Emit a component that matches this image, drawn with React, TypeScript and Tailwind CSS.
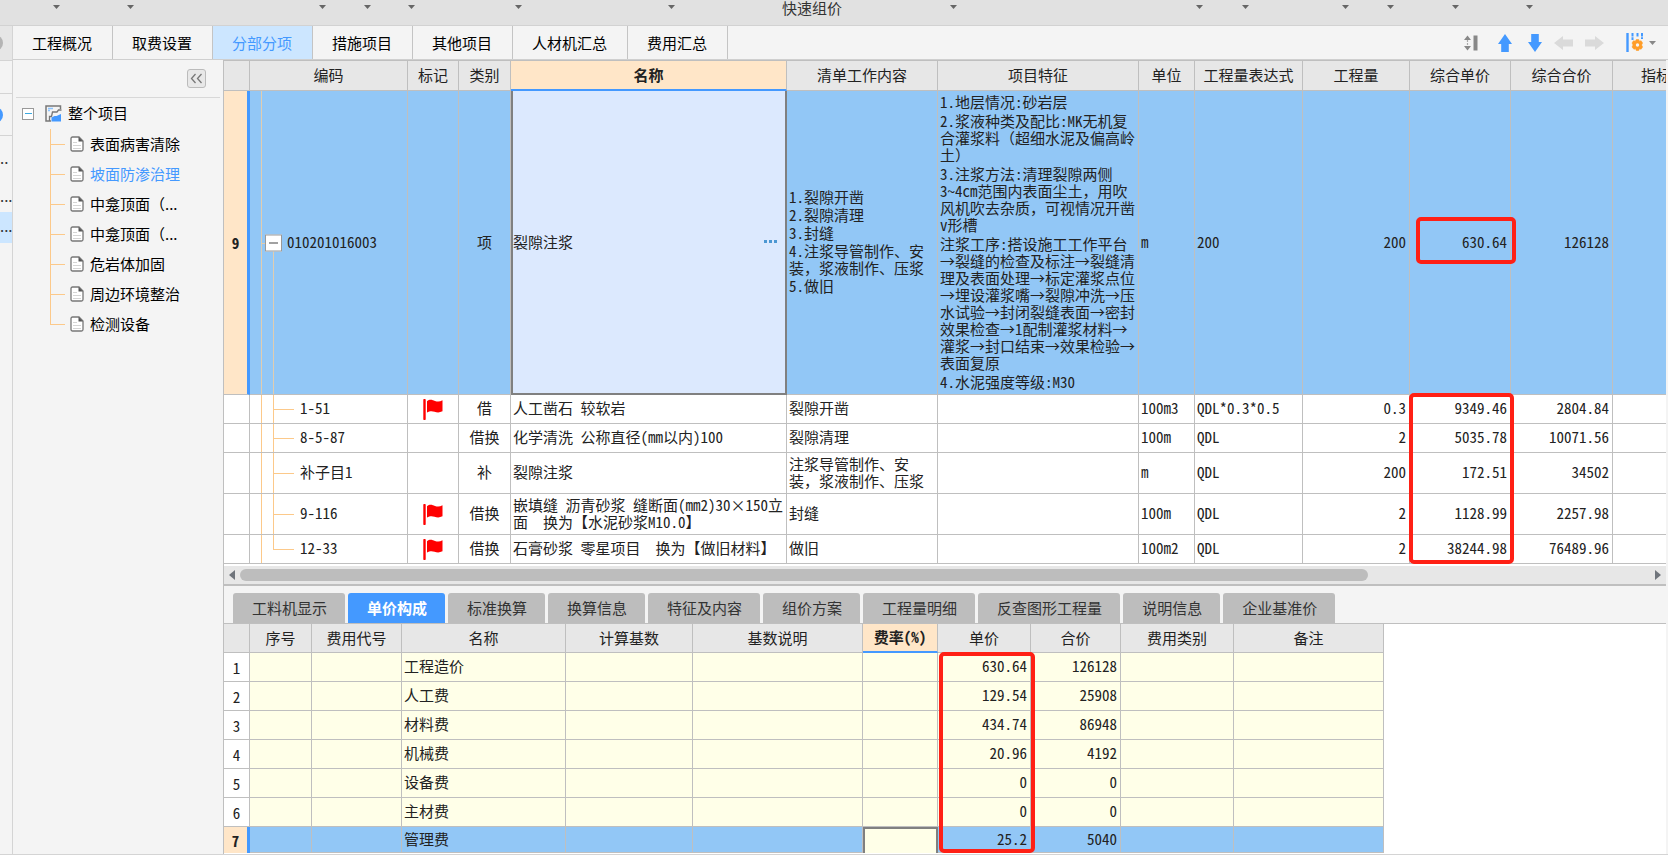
import { useState, type ReactNode } from "react";
import clsx from "clsx";

type SubItem = {
  code: string;
  flag: boolean;
  kind: string;
  name: string;
  work: string;
  unit: string;
  expr: string;
  qty: string;
  price: string;
  total: string;
  height: string;
};

const TOOLBAR_LEFT = ["w-[60px]", "w-[74px]", "w-[192px]", "w-[45px]", "w-[44px]", "w-[107px]", "w-[153px]"];
const TOOLBAR_RIGHT = ["w-[115px]", "w-[246px]", "w-[46px]", "w-[100px]", "w-[45px]", "w-[65px]", "w-[74px]"];

const PAGES = ["工程概况", "取费设置", "分部分项", "措施项目", "其他项目", "人材机汇总", "费用汇总"];

const TREE = ["表面病害清除", "坡面防渗治理", "中龛顶面（...", "中龛顶面（...", "危岩体加固", "周边环境整治", "检测设备"];

const ITEM_COLS = [
  { title: "", width: "w-[26px]" },
  { title: "编码", width: "w-[158px]" },
  { title: "标记", width: "w-[51px]" },
  { title: "类别", width: "w-[52px]" },
  { title: "名称", width: "w-[276px]" },
  { title: "清单工作内容", width: "w-[151px]" },
  { title: "项目特征", width: "w-[201px]" },
  { title: "单位", width: "w-[56px]" },
  { title: "工程量表达式", width: "w-[108px]" },
  { title: "工程量", width: "w-[107px]" },
  { title: "综合单价", width: "w-[101px]" },
  { title: "综合合价", width: "w-[102px]" },
];

const WORK = ["1.裂隙开凿", "2.裂隙清理", "3.封缝", "4.注浆导管制作、安\n装，浆液制作、压浆", "5.做旧"];

const FEATURES = [
  "1.地层情况:砂岩层",
  "2.浆液种类及配比:MK无机复\n合灌浆料（超细水泥及偏高岭\n土）",
  "3.注浆方法:清理裂隙两侧\n3~4cm范围内表面尘土，用吹\n风机吹去杂质，可视情况开凿\nv形槽",
  "注浆工序:搭设施工工作平台\n→裂缝的检查及标注→裂缝清\n理及表面处理→标定灌浆点位\n→埋设灌浆嘴→裂隙冲洗→压\n水试验→封闭裂缝表面→密封\n效果检查→1配制灌浆材料→\n灌浆→封口结束→效果检验→\n表面复原",
  "4.水泥强度等级:M30",
];

const SUB_ITEMS: SubItem[] = [
  { code: "1-51", flag: true, kind: "借", name: "人工凿石 较软岩", work: "裂隙开凿", unit: "100m3", expr: "QDL*0.3*0.5", qty: "0.3", price: "9349.46", total: "2804.84", height: "h-[29px]" },
  { code: "8-5-87", flag: false, kind: "借换", name: "化学清洗 公称直径(mm以内)100", work: "裂隙清理", unit: "100m", expr: "QDL", qty: "2", price: "5035.78", total: "10071.56", height: "h-[29px]" },
  { code: "补子目1", flag: false, kind: "补", name: "裂隙注浆", work: "注浆导管制作、安\n装，浆液制作、压浆", unit: "m", expr: "QDL", qty: "200", price: "172.51", total: "34502", height: "h-[41px]" },
  { code: "9-116", flag: true, kind: "借换", name: "嵌填缝 沥青砂浆 缝断面(mm2)30×150立\n面  换为【水泥砂浆M10.0】", work: "封缝", unit: "100m", expr: "QDL", qty: "2", price: "1128.99", total: "2257.98", height: "h-[41px]" },
  { code: "12-33", flag: true, kind: "借换", name: "石膏砂浆 零星项目  换为【做旧材料】", work: "做旧", unit: "100m2", expr: "QDL", qty: "2", price: "38244.98", total: "76489.96", height: "h-[29px]" },
];

const DETAIL_TABS = ["工料机显示", "单价构成", "标准换算", "换算信息", "特征及内容", "组价方案", "工程量明细", "反查图形工程量", "说明信息", "企业基准价"];

const FEE_COLS = [
  { title: "", width: "w-[26px]" },
  { title: "序号", width: "w-[62px]" },
  { title: "费用代号", width: "w-[90px]" },
  { title: "名称", width: "w-[164px]" },
  { title: "计算基数", width: "w-[127px]" },
  { title: "基数说明", width: "w-[170px]" },
  { title: "费率(%)", width: "w-[75px]" },
  { title: "单价", width: "w-[93px]" },
  { title: "合价", width: "w-[90px]" },
  { title: "费用类别", width: "w-[113px]" },
  { title: "备注", width: "w-[150px]" },
];

const FEES = [
  { name: "工程造价", price: "630.64", total: "126128" },
  { name: "人工费", price: "129.54", total: "25908" },
  { name: "材料费", price: "434.74", total: "86948" },
  { name: "机械费", price: "20.96", total: "4192" },
  { name: "设备费", price: "0", total: "0" },
  { name: "主材费", price: "0", total: "0" },
  { name: "管理费", price: "25.2", total: "5040" },
];

const GRID_FONT = "[font-feature-settings:'hwid'] text-[15px] leading-[17px] text-[#222]";

// Grid text uses half-width latin, Chinese punctuation must stay full width
function GridText({ text }: { text: string }) {
  return (
    <>
      {text.split(/([（），])/).map((part, i) =>
        i % 2 ? (
          <span key={i} className="[font-feature-settings:normal]">
            {part}
          </span>
        ) : (
          part
        )
      )}
    </>
  );
}

function Caret({ className = "text-[#666]" }: { className?: string }) {
  return (
    <svg width="7" height="4" viewBox="0 0 7 4" className={clsx("shrink-0", className)}>
      <path d="M0 0h7L3.5 4z" fill="currentColor" />
    </svg>
  );
}

function Flag() {
  return (
    <svg width="20" height="21" viewBox="0 0 20 21" className="mx-auto block">
      <path d="M1.5 1v19" stroke="#ff0000" strokeWidth="2.4" strokeLinecap="round" />
      <path d="M4 2.2C7-.4 9.500 1 12 1.900c2.500 1 5 .8 7.500-.6v11c-3 1.500-5.500 1.300-8 .4-2.500-.8-4.800-.8-7.500.8z" fill="#ff0000" />
    </svg>
  );
}

function DocIcon() {
  return (
    <svg width="14" height="16" viewBox="0 0 14 16" className="shrink-0">
      <path d="M1 2.500A1.500 1.500 0 0 1 2.500 1H9l4 4v8.500a1.500 1.500 0 0 1-1.500 1.500h-9A1.500 1.500 0 0 1 1 13.500z" fill="#fff" stroke="#777" strokeWidth="1.300" />
      <path d="M8.500 1v4.500H13z" fill="#555" />
      <path d="M3 6.500h4M3 9.500h8M3 12.500h8" stroke="#d5d5d5" />
    </svg>
  );
}

function ProjectIcon() {
  return (
    <svg width="17" height="17" viewBox="0 0 17 17" className="shrink-0">
      <path d="M15.500 4V1H1v15h5" fill="none" stroke="#777" strokeWidth="1.500" />
      <path d="M3 3.500h5M3 5.500h2" stroke="#8cc4ff" strokeWidth="1.500" />
      <path d="M4.500 16v-4.500h2l1-4.500h4.500l1.500-2h3" fill="none" stroke="#777" strokeWidth="1.300" />
      <path d="M6.500 12.500l3-1.500h2l4.500-2v7.500H6.500z" fill="#4499ff" />
    </svg>
  );
}

function Toolbar() {
  const menus = (widths: string[], from: number) =>
    widths.map((w, i) => (
      <button key={i} aria-label={`菜单 ${from + i}`} className={clsx("flex h-full shrink-0 justify-end pt-[5px]", w)}>
        <Caret />
      </button>
    ));

  return (
    <header className="flex h-[26px] overflow-hidden border-b border-[#d2d2d2] bg-[#e1e1e1]">
      {menus(TOOLBAR_LEFT, 1)}
      <button className="flex w-[167px] shrink-0 justify-end text-[15px] leading-[16px] text-[#333]">快速组价</button>
      {menus(TOOLBAR_RIGHT, 8)}
    </header>
  );
}

function EdgeStrip() {
  return (
    <aside className="flex w-[13px] shrink-0 flex-col overflow-hidden border-r border-[#d4d4d4] bg-[#f4f4f4] text-[15px] leading-[16px] text-[#333]">
      <div className="flex h-[35px] items-center border-b border-[#d4d4d4] bg-[#e6e6e6]">
        <span className="-ml-[13px] size-4 shrink-0 rounded-full bg-[#b4b4b4]" />
      </div>
      <div className="h-[33px] border-b border-[#d4d4d4]" />
      <div className="flex h-[42px] items-center border-b border-[#d4d4d4]">
        <span className="-ml-[13px] size-4 shrink-0 rounded-full bg-[#4499ff]" />
      </div>
      <div className="h-[32px] pt-[14px]">..</div>
      <div className="flex h-[44px] items-end pb-2">...</div>
      <div className="flex h-[31px] items-center bg-[#cce6ff] pb-1">...</div>
    </aside>
  );
}

function PageNav() {
  const [page, setPage] = useState("分部分项");

  return (
    <nav className="flex h-[34px] items-center border-b border-[#cfcfcf] bg-[#f4f4f4] text-[15px]">
      {PAGES.map((p) => (
        <button
          key={p}
          onClick={() => setPage(p)}
          className={clsx(
            "h-full shrink-0 border-r border-[#c4c4c4] pt-[2px] pr-5 pl-[19px]",
            p === page ? "bg-[#cce6ff] text-[#4499ff]" : "text-black"
          )}
        >
          {p}
        </button>
      ))}
      <div className="ml-auto flex items-center pr-3">
        <button aria-label="行高" className="mr-5">
          <svg width="14" height="16" viewBox="0 0 14 16">
            <path d="M0 5l3.500-4.500L7 5zM0 11l3.500 4.500L7 11z" fill="#888" />
            <path d="M3.500 5v6" stroke="#aaa" strokeWidth="1.200" strokeDasharray="2 1" />
            <path d="M9.500.5h4v15h-4z" fill="#888" />
          </svg>
        </button>
        <button aria-label="上移" className="mr-4">
          <svg width="14" height="18" viewBox="0 0 14 18">
            <path d="M7 0l7 10h-3.200v8H3.200v-8H0z" fill="#4499ff" />
          </svg>
        </button>
        <button aria-label="下移" className="mr-3">
          <svg width="14" height="18" viewBox="0 0 14 18">
            <path d="M7 18l7-10h-3.200V0H3.200v8H0z" fill="#4499ff" />
          </svg>
        </button>
        <button aria-label="左移" className="mr-3">
          <svg width="19" height="14" viewBox="0 0 19 14">
            <path d="M0 7l9-7v3.500h10v7H9V14z" fill="#dadada" />
          </svg>
        </button>
        <button aria-label="右移" className="mr-[22px]">
          <svg width="19" height="14" viewBox="0 0 19 14">
            <path d="M19 7l-9-7v3.500H0v7h10V14z" fill="#dadada" />
          </svg>
        </button>
        <button aria-label="列设置" className="flex items-center gap-[6px]">
          <svg width="17" height="19" viewBox="0 0 17 19">
            <path d="M1.500 0v19" stroke="#4499ff" strokeWidth="2.400" />
            <path d="M6.500 0v7M11.500 0v3.500M16 0v6" stroke="#4499ff" strokeWidth="2" strokeDasharray="3.500 .8" />
            <path
              d="M10.300 6.500h2.400l.6 1.700 1.800-.4 1.500 2.200-.8 1.400v1.200l.8 1.400-1.500 2.200-1.800-.4-.6 1.700h-2.400l-.6-1.700-1.800.4L6 14l.8-1.400v-1.200L6 10l1.500-2.200 1.800.4z"
              fill="#ff9d28"
              stroke="#ff9d28"
              strokeWidth=".6"
            />
            <circle cx="11.500" cy="12" r="1.700" fill="#f4f4f4" />
          </svg>
          <Caret className="text-[#888]" />
        </button>
      </div>
    </nav>
  );
}

function ProjectTree() {
  const [selected, setSelected] = useState(1);

  return (
    <aside className="w-[210px] shrink-0 bg-[#f4f4f4] px-[3px] text-[15px] text-black">
      <div className="flex h-[38px] items-center justify-end border-b border-[#d8d8d8] pr-[14px]">
        <button aria-label="收起" className="flex size-[19px] items-center justify-center rounded-[3px] border border-[#bbb] bg-[#e8e8e8]">
          <svg width="13" height="11" viewBox="0 0 13 11">
            <path d="M5.500 1l-4 4.500 4 4.500M11.500 1l-4 4.500 4 4.500" fill="none" stroke="#777" strokeWidth="1.300" />
          </svg>
        </button>
      </div>
      <div className="flex h-[31px] items-center pl-[6px]">
        <button aria-label="折叠" className="flex size-[12px] shrink-0 items-center justify-center border border-[#999] bg-white">
          <span className="h-px w-[7px] bg-[#3ba9e0]" />
        </button>
        <span className="ml-[11px]">
          <ProjectIcon />
        </span>
        <span className="ml-1.5">整个项目</span>
      </div>
      <ul>
        {TREE.map((t, i) => (
          <li key={i} className="relative flex h-[30px] items-center pl-[54px]">
            <span className={clsx("absolute left-[34px] w-px bg-[#fcc98a]", i === TREE.length - 1 ? "top-0 h-[15px]" : "inset-y-0")} />
            <span className="absolute top-[15px] left-[34px] h-px w-[15px] bg-[#fcc98a]" />
            <DocIcon />
            <button onClick={() => setSelected(i)} className={clsx("ml-1.5 whitespace-nowrap", i === selected && "text-[#4499ff]")}>
              {t}
            </button>
          </li>
        ))}
      </ul>
    </aside>
  );
}

function Head({ title, active }: { title: string; active: boolean }) {
  return (
    <th
      className={clsx(
        "border-r border-[#bfbfbf] p-0 pb-[2px] text-center whitespace-nowrap",
        active ? "border-b-2 border-b-[#4499ff] bg-[#ffe6c8] font-bold" : "border-b bg-[#e7e7e7] font-normal"
      )}
    >
      {title}
    </th>
  );
}

function Cell({ children, className = "px-[2px] pb-[3px]" }: { children?: ReactNode; className?: string }) {
  return <td className={clsx("relative border-r border-b border-[#bfbfbf] pt-0 whitespace-pre", className)}>{children}</td>;
}

function NumberCell({ children }: { children: ReactNode }) {
  return <Cell className="pr-[3px] pb-[3px] text-right">{children}</Cell>;
}

function ItemTable() {
  return (
    <table className={clsx("w-full table-fixed border-separate border-spacing-0", GRID_FONT)}>
      <colgroup>
        {ITEM_COLS.map((c, i) => (
          <col key={i} className={c.width} />
        ))}
        <col />
      </colgroup>
      <thead>
        <tr className="h-[30px]">
          {ITEM_COLS.map((c, i) => (
            <Head key={i} title={c.title} active={c.title === "名称"} />
          ))}
          <th className="overflow-hidden border-b border-[#bfbfbf] bg-[#e7e7e7] p-0 pb-[2px] pl-7 text-left font-normal text-clip whitespace-nowrap">
            指标
          </th>
        </tr>
      </thead>
      <tbody>
        <tr className="h-[304px] bg-[#92c7f6]">
          <td className="border-r-[3px] border-b border-r-[#4499ff] border-b-[#bfbfbf] bg-[#ffe6c8] p-0 text-center font-bold">9</td>
          <Cell className="pb-[3px] pl-[37px]">
            <span className="absolute inset-y-0 left-[11px] w-px bg-[#e0cdb0]" />
            <span className="absolute top-1/2 bottom-0 left-[23px] w-px bg-[#e0cdb0]" />
            <span className="absolute top-1/2 left-[11px] h-px w-[5px] bg-[#e0cdb0]" />
            <button aria-label="折叠清单" className="absolute top-1/2 left-[15px] flex size-[17px] -translate-y-1/2 items-center justify-center border border-[#999] bg-white">
              <span className="h-px w-[9px] bg-[#444]" />
            </button>
            010201016003
          </Cell>
          <Cell />
          <Cell className="pb-[3px] text-center">项</Cell>
          <td className="border-2 border-t-0 border-[#808080] bg-[#dce9fe] p-0 pb-[2px]">
            <div className="flex items-center pr-2">
              <input aria-label="名称" defaultValue="裂隙注浆" className="min-w-0 flex-1 bg-transparent outline-none" />
              <button aria-label="更多" className="flex gap-[2px]">
                <span className="size-[3px] bg-[#4b97d2]" />
                <span className="size-[3px] bg-[#4b97d2]" />
                <span className="size-[3px] bg-[#4b97d2]" />
              </button>
            </div>
          </td>
          <Cell>
            <div className="flex flex-col gap-px">
              {WORK.map((w) => (
                <p key={w}>
                  <GridText text={w} />
                </p>
              ))}
            </div>
          </Cell>
          <Cell>
            <div className="flex flex-col gap-[2px]">
              {FEATURES.map((f) => (
                <p key={f}>
                  <GridText text={f} />
                </p>
              ))}
            </div>
          </Cell>
          <Cell>m</Cell>
          <Cell>200</Cell>
          <NumberCell>200</NumberCell>
          <NumberCell>
            630.64
            <span className="pointer-events-none absolute top-[126px] -right-[6px] left-[6px] h-[47px] rounded-[5px] border-4 border-[#ff2015]" />
          </NumberCell>
          <NumberCell>126128</NumberCell>
          <td className="border-b border-[#bfbfbf]" />
        </tr>
        {SUB_ITEMS.map((s, i) => (
          <tr key={s.code} className={clsx("bg-white", s.height)}>
            <Cell />
            <Cell className="pb-[3px] pl-[50px]">
              <span className="absolute inset-y-0 left-[11px] w-px bg-[#fcc98a]" />
              <span className={clsx("absolute top-0 left-[23px] w-px bg-[#fcc98a]", i === SUB_ITEMS.length - 1 ? "h-1/2" : "h-full")} />
              <span className="absolute top-1/2 left-[23px] h-px w-[21px] bg-[#fcc98a]" />
              {s.code}
            </Cell>
            <Cell className="p-0">{s.flag && <Flag />}</Cell>
            <Cell className="pb-[3px] text-center">{s.kind}</Cell>
            <Cell>{s.name}</Cell>
            <Cell>
              <GridText text={s.work} />
            </Cell>
            <Cell />
            <Cell>{s.unit}</Cell>
            <Cell>{s.expr}</Cell>
            <NumberCell>{s.qty}</NumberCell>
            <NumberCell>
              {s.price}
              {i === 0 && (
                <span className="pointer-events-none absolute -top-[2px] -right-[4px] -left-px z-10 h-[171px] rounded-[5px] border-4 border-[#ff2015]" />
              )}
            </NumberCell>
            <NumberCell>{s.total}</NumberCell>
            <td className="border-b border-[#bfbfbf]" />
          </tr>
        ))}
      </tbody>
    </table>
  );
}

function ScrollBar() {
  return (
    <div className="mt-[2px] flex h-[18px] items-center bg-[#e7e7e7]">
      <button aria-label="向左滚动" className="flex w-4 justify-center">
        <svg width="6" height="10" viewBox="0 0 6 10">
          <path d="M6 0v10L0 5z" fill="#70757c" />
        </svg>
      </button>
      <div className="flex-1">
        <div className="h-3 w-4/5 rounded-full bg-[#bdbdbd]" />
      </div>
      <button aria-label="向右滚动" className="flex w-4 justify-center">
        <svg width="6" height="10" viewBox="0 0 6 10">
          <path d="M0 0v10l6-5z" fill="#70757c" />
        </svg>
      </button>
    </div>
  );
}

function FeeTable() {
  return (
    <table className={clsx("w-[1160px] table-fixed border-separate border-spacing-0", GRID_FONT)}>
      <colgroup>
        {FEE_COLS.map((c, i) => (
          <col key={i} className={c.width} />
        ))}
      </colgroup>
      <thead>
        <tr className="h-[29px]">
          {FEE_COLS.map((c, i) => (
            <Head key={i} title={c.title} active={c.title === "费率(%)"} />
          ))}
        </tr>
      </thead>
      <tbody>
        {FEES.map((f, i) => {
          const active = i === FEES.length - 1;
          return (
            <tr key={f.name} className={active ? "h-[26px] bg-[#92c7f6]" : "h-[29px] bg-[#ffffe8]"}>
              <td
                className={clsx(
                  "border-[#bfbfbf] p-0 text-center",
                  active ? "border-r-[3px] border-r-[#4499ff] bg-[#ffe6c8] font-bold" : "border-r border-b bg-white"
                )}
              >
                {i + 1}
              </td>
              <Cell />
              <Cell />
              <Cell>{f.name}</Cell>
              <Cell />
              <Cell />
              {active ? (
                <td className="border-2 border-b-0 border-[#808080] bg-[#ffffe8] p-0">
                  <input aria-label="费率" className="block h-4 w-full bg-transparent outline-none" />
                </td>
              ) : (
                <Cell />
              )}
              <NumberCell>
                {f.price}
                {i === 0 && (
                  <span className="pointer-events-none absolute -top-px -right-[5px] left-px z-10 h-[201px] rounded-[5px] border-4 border-[#ff2015]" />
                )}
              </NumberCell>
              <NumberCell>{f.total}</NumberCell>
              <Cell />
              <Cell />
            </tr>
          );
        })}
      </tbody>
    </table>
  );
}

export default function App() {
  const [tab, setTab] = useState("单价构成");

  return (
    <div className="flex min-h-screen flex-col overflow-hidden border-b border-[#d4d4d4] bg-[#f4f4f4] font-['Noto_Sans_CJK_SC',sans-serif]">
      <Toolbar />
      <div className="flex flex-1">
        <EdgeStrip />
        <div className="flex min-w-0 flex-1 flex-col">
          <PageNav />
          <div className="flex flex-1">
            <ProjectTree />
            <main className="mr-[2px] min-w-0 flex-1 border-l border-[#bfbfbf] bg-white">
              <section className="border-y border-b-2 border-[#bfbfbf]">
                <ItemTable />
                <ScrollBar />
              </section>
              <section>
                <div className="flex gap-[3px] border-b border-[#bfbfbf] bg-[#f4f4f4] pt-[7px] pl-[9px] text-[15px]">
                  {DETAIL_TABS.map((t) => (
                    <button
                      key={t}
                      onClick={() => setTab(t)}
                      className={clsx(
                        "h-[30px] shrink-0 rounded-t-[3px] pr-[18px] pl-[19px]",
                        t === tab ? "bg-[#4499ff] font-bold text-white" : "bg-[#bdbdbd] text-[#333]"
                      )}
                    >
                      {t}
                    </button>
                  ))}
                </div>
                <FeeTable />
              </section>
            </main>
          </div>
        </div>
      </div>
    </div>
  );
}
